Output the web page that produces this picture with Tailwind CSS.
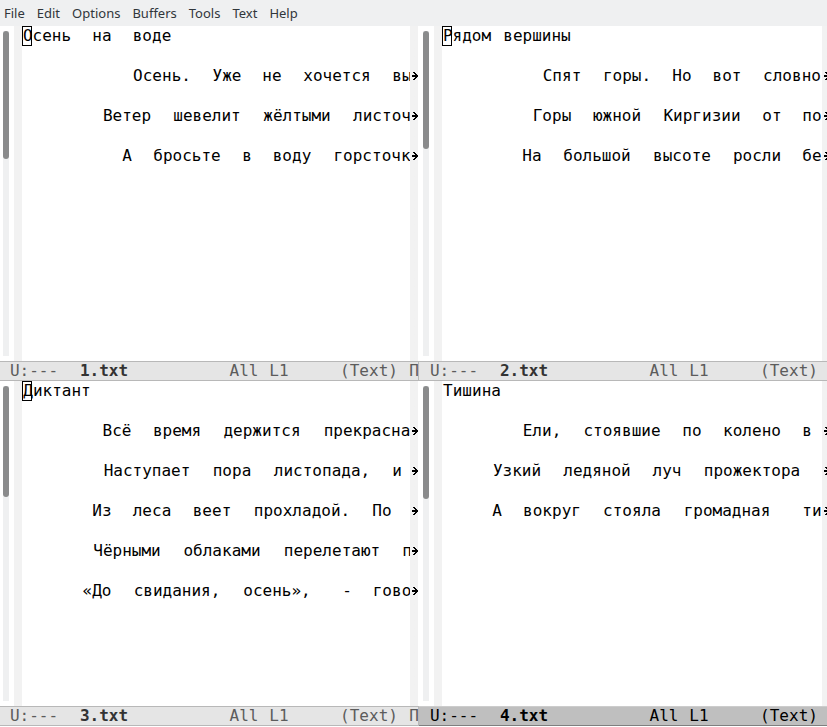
<!DOCTYPE html>
<html lang="ru">
<head>
<meta charset="utf-8">
<meta name="viewport" content="width=device-width, initial-scale=1">
<title>Emacs</title>
<script src="https://cdn.jsdelivr.net/npm/@tailwindcss/browser@4"></script>
</head>
<body class="flex h-screen flex-col overflow-hidden bg-white text-black">
<nav class="flex h-[26px] shrink-0 items-center gap-3 bg-[#eff0f1] pl-1 pt-0.5 font-['Noto_Sans',sans-serif] text-[13px] text-[#31363b]">
  <button type="button">File</button>
  <button type="button">Edit</button>
  <button type="button">Options</button>
  <button type="button">Buffers</button>
  <button type="button">Tools</button>
  <button type="button">Text</button>
  <button type="button">Help</button>
</nav>
<main id="frame" class="grid min-h-0 flex-1 grid-cols-[minmax(0,419fr)_minmax(0,408fr)] grid-rows-[minmax(0,355fr)_minmax(0,345fr)] pb-px font-['DejaVu_Sans_Mono',monospace] text-[16px] leading-5"></main>

<script>
const buffers = [
  { name: "1.txt", cursor: true, thumb: 128 / 325, tail: " П", lines: [
    "Осень  на  воде",
    "           Осень.  Уже  не  хочется  вы",
    "        Ветер  шевелит  жёлтыми  листоч",
    "          А  бросьте  в  воду  горсточк" ] },
  { name: "2.txt", cursor: true, right: true, thumb: 118 / 325, tail: "", lines: [
    "Рядом вершины",
    "          Спят  горы.  Но  вот  словно",
    "         Горы  южной  Киргизии  от  по",
    "        На  большой  высоте  росли  бе" ] },
  { name: "3.txt", cursor: true, thumb: 111 / 315, tail: " П", lines: [
    "Диктант",
    "        Всё  время  держится  прекрасна",
    "        Наступает  пора  листопада,  и",
    "       Из  леса  веет  прохладой.  По",
    "       Чёрными  облаками  перелетают  п",
    "      «До  свидания,  осень»,   -  гово" ] },
  { name: "4.txt", right: true, active: true, thumb: 113 / 315, tail: "", lines: [
    "Тишина",
    "        Ели,  стоявшие  по  колено  в",
    "     Узкий  ледяной  луч  прожектора",
    "     А  вокруг  стояла  громадная   ти" ] }
];

// Places each word on a grid of 10px character cells.
const cells = (text) => [...text.matchAll(/\S+/g)].map((m) =>
  `<span class="text-center" style="grid-column:${m.index + 1} / span ${m[0].length}">${m[0]}</span>`).join(" ");

const arrow = `<svg class="h-2 w-2 shrink-0" viewBox="0 0 8 8" shape-rendering="crispEdges" aria-hidden="true"><path d="M3 0h2v1h1v1h1v1h1v2h-1v1h-1v1h-1v1h-2v-1h1v-1h1v-1h-3v-2h3v-1h-1v-1h-1z"/></svg>`;

const row = (text, i, b) => `
  <div class="flex h-5 items-center">
    <div class="relative grid h-5 min-w-0 flex-1 auto-cols-[10px] grid-flow-col justify-start overflow-hidden whitespace-nowrap">
      ${cells(text)}
      ${i === 0 && b.cursor ? '<i class="absolute left-0 top-0 h-5 w-2.5 border border-black"></i>' : ""}
    </div>
    <span class="flex w-2 shrink-0">${i > 0 ? arrow : ""}</span>
  </div>`;

const modeLine = (b) => {
  const look = b.active
    ? "border-t-[#cccccc] border-b-[#7f7f7f] bg-[#bfbfbf] text-black"
    : "border-[#b8b8b8] bg-[#e5e5e5] text-[#5c5c5c]";
  const nameColor = b.active ? "text-black" : "text-[#333333]";
  const side = b.right ? "pl-2.5" : "border-r pl-[9px]";
  return `
  <footer class="grid h-5 shrink-0 auto-cols-[10px] grid-flow-col justify-start overflow-hidden whitespace-nowrap border-y leading-[18px] ${side} ${look}">
    ${cells("U:---")}
    <b class="col-start-8 col-end-13 text-center ${nameColor}">${b.name}</b>
    ${cells(" ".repeat(22) + "All L1     (Text)" + b.tail)}
  </footer>`;
};

document.getElementById("frame").innerHTML = buffers.map((b) => `
  <section class="flex min-w-0 flex-col" aria-label="${b.name}">
    <div class="flex min-h-0 flex-1 ${b.right ? "pl-1" : "pl-[3px] pr-px"}">
      <div class="my-[5px] mr-[5px] w-1.5 shrink-0 bg-[#eff0f1]">
        <div class="rounded-full bg-[#8a8b8c]" style="height:${b.thumb * 100}%"></div>
      </div>
      <div class="w-2 shrink-0 bg-[#f2f2f2]"></div>
      <div class="min-w-0 flex-1 overflow-hidden bg-linear-to-l from-[#f2f2f2] from-[8px] to-white to-[8px] ${b.right ? "-mr-[3px]" : ""}">
        ${b.lines.map((l, i) => row(l, i, b) + (i < b.lines.length - 1 ? '<div class="h-5"></div>' : "")).join("")}
      </div>
    </div>
    ${modeLine(b)}
  </section>`).join("");
</script>
</body>
</html>
